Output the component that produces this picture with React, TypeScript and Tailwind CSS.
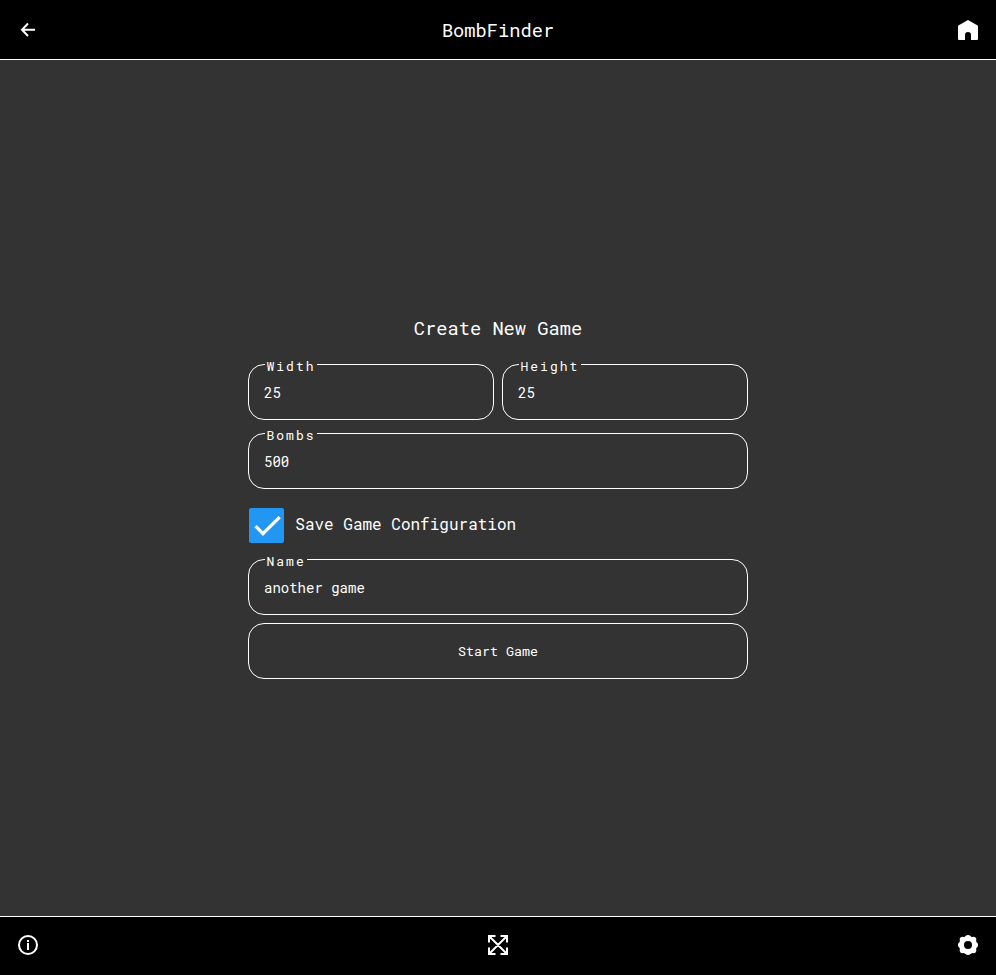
import { useState } from "react";

function Field({ label, initial }: { label: string; initial: string }) {
  const [value, setValue] = useState(initial);
  return (
    <label className="relative block h-14 w-full rounded-2xl border border-white">
      <span className="absolute -top-2 left-4 bg-[#333] px-[1.5px] text-[13px] leading-[18px] tracking-[2px]">
        {label}
      </span>
      <input
        className="block h-full w-full bg-transparent px-[15px] text-sm text-white outline-none"
        value={value}
        onChange={(e) => setValue(e.target.value)}
      />
    </label>
  );
}

function BackIcon() {
  return (
    <svg width="24" height="24" viewBox="0 0 24 24" fill="none" stroke="currentColor" strokeWidth="2">
      <path d="M19 11.7H6.5M12 5.5L6 11.7L12 18" />
    </svg>
  );
}

function HomeIcon() {
  return (
    <svg width="24" height="24" viewBox="0 0 24 24" fill="currentColor">
      <path d="M12 2L21.2 7.3Q22 7.8 22 8.7V21Q22 22 21 22H15V17Q15 14 12 14T9 17V22H3Q2 22 2 21V8.7Q2 7.8 2.8 7.3Z" />
    </svg>
  );
}

function InfoIcon() {
  return (
    <svg width="24" height="24" viewBox="0 0 24 24" fill="none" stroke="currentColor" strokeWidth="2">
      <circle cx="12" cy="12" r="9" />
      <path d="M12 7V9M12 10V17" />
    </svg>
  );
}

function ExpandIcon() {
  return (
    <svg width="24" height="24" viewBox="0 0 24 24" fill="none" stroke="currentColor" strokeWidth="2">
      <path d="M3 9.5V3H9.5M14.5 3H21V9.5M21 14.5V21H14.5M9.5 21H3V14.5M3 3L21 21M21 3L3 21" />
    </svg>
  );
}

function GearIcon() {
  return (
    <svg width="24" height="24" viewBox="0 0 24 24" fill="currentColor">
      <circle cx="12" cy="12" r="9.1" />
      <circle cx="12" cy="5" r="3" />
      <circle cx="17.3" cy="6.7" r="3" />
      <circle cx="19" cy="12" r="3" />
      <circle cx="17.3" cy="17.3" r="3" />
      <circle cx="12" cy="19" r="3" />
      <circle cx="6.7" cy="17.3" r="3" />
      <circle cx="5" cy="12" r="3" />
      <circle cx="6.7" cy="6.7" r="3" />
      <circle cx="12" cy="12" r="4" fill="black" />
    </svg>
  );
}

export default function App() {
  return (
    <div className="flex h-screen flex-col bg-[#333] font-['Roboto_Mono','DejaVu_Sans_Mono',monospace] text-white">
      <header className="flex h-[60px] shrink-0 items-center justify-between border-b border-white bg-black px-4 pt-px">
        <button aria-label="Back"><BackIcon /></button>
        <h1 className="text-[18.72px] leading-6">BombFinder</h1>
        <button aria-label="Home"><HomeIcon /></button>
      </header>

      <main className="flex flex-1 justify-center pt-[255px]">
        <div className="flex w-[500px] flex-col">
          <h2 className="text-center text-[18.72px] leading-[25px]">Create New Game</h2>
          <div className="mt-6 flex gap-2">
            <Field label="Width" initial="25" />
            <Field label="Height" initial="25" />
          </div>
          <div className="mt-[13px]">
            <Field label="Bombs" initial="500" />
          </div>
          <div className="mt-[19px] flex h-[35px] items-start pl-px">
            <span className="h-[35px] w-[35px] rounded-[2px] bg-[#2196f3]">
              <svg width="36" height="36" viewBox="0 0 24 24" fill="white">
                <path d="M9.3 15.5L5.1 11.4L3.6 12.9L9.3 18.6L21.2 6.9L19.7 5.4Z" />
              </svg>
            </span>
            <span className="ml-[11.3px] mt-1.5 text-base leading-5">Save Game Configuration</span>
          </div>
          <div className="mt-4">
            <Field label="Name" initial="another game" />
          </div>
          <button className="mt-2 h-14 rounded-2xl border border-white pt-0.5 text-[13.333px]">Start Game</button>
        </div>
      </main>

      <footer className="flex h-[59px] shrink-0 items-center justify-between border-t border-white bg-black px-4 pb-0.5">
        <button aria-label="Information"><InfoIcon /></button>
        <button aria-label="Full screen"><ExpandIcon /></button>
        <button aria-label="Settings"><GearIcon /></button>
      </footer>
    </div>
  );
}
